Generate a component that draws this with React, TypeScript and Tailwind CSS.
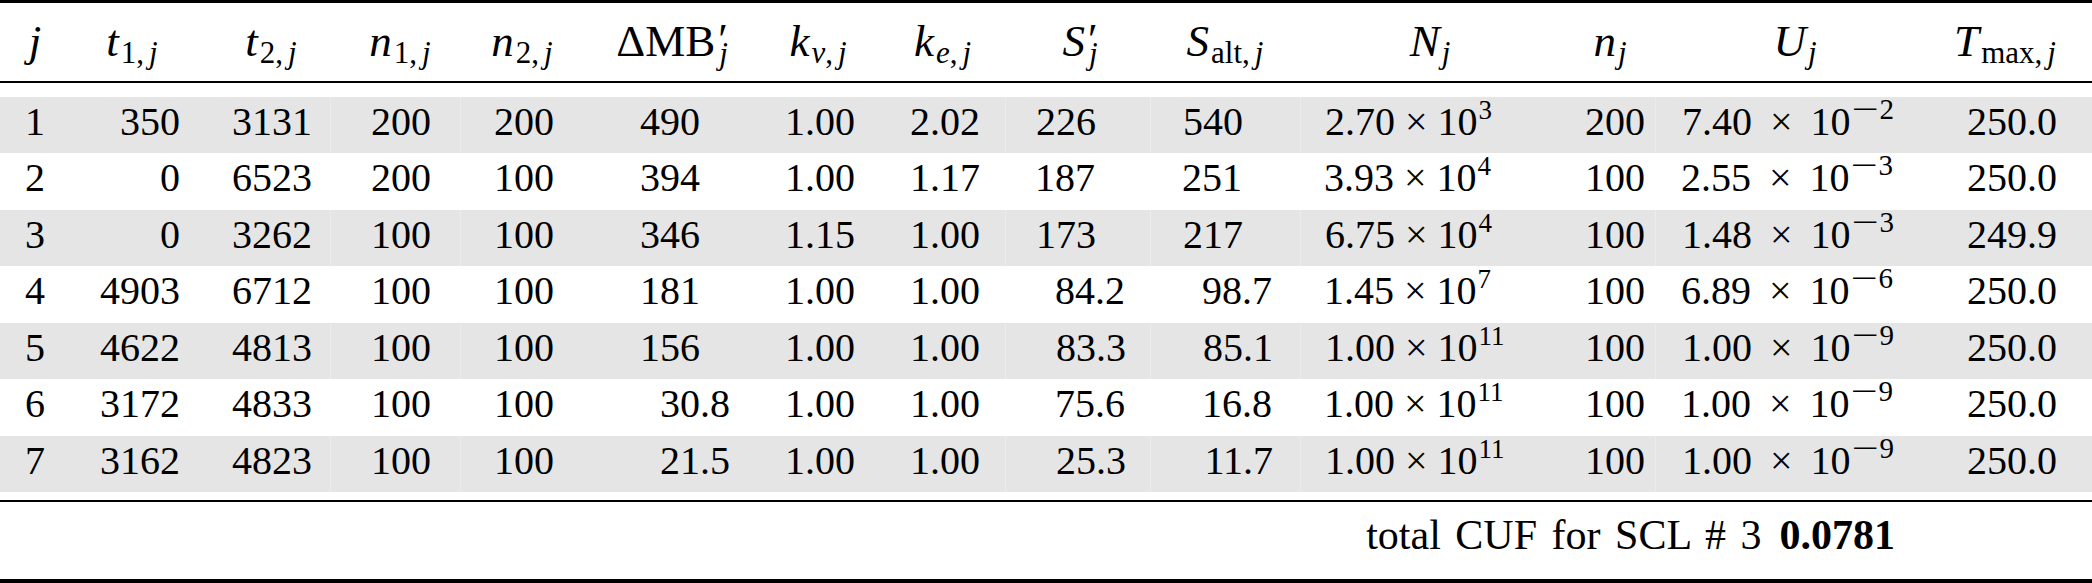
import type { ReactNode } from "react";

type Row = {
    j: string;
    t1: string;
    t2: string;
    n1: string;
    n2: string;
    mb: [string, string];
    kv: string;
    ke: string;
    s: [string, string];
    salt: [string, string];
    N: [string, string];
    n: string;
    U: [string, string];
    tmax: string;
};

const rows: Row[] = [
    { j: "1", t1: "350", t2: "3131", n1: "200", n2: "200", mb: ["490", ""], kv: "1.00", ke: "2.02", s: ["226", ""], salt: ["540", ""], N: ["2.70", "3"], n: "200", U: ["7.40", "2"], tmax: "250.0" },
    { j: "2", t1: "0", t2: "6523", n1: "200", n2: "100", mb: ["394", ""], kv: "1.00", ke: "1.17", s: ["187", ""], salt: ["251", ""], N: ["3.93", "4"], n: "100", U: ["2.55", "3"], tmax: "250.0" },
    { j: "3", t1: "0", t2: "3262", n1: "100", n2: "100", mb: ["346", ""], kv: "1.15", ke: "1.00", s: ["173", ""], salt: ["217", ""], N: ["6.75", "4"], n: "100", U: ["1.48", "3"], tmax: "249.9" },
    { j: "4", t1: "4903", t2: "6712", n1: "100", n2: "100", mb: ["181", ""], kv: "1.00", ke: "1.00", s: ["84", ".2"], salt: ["98", ".7"], N: ["1.45", "7"], n: "100", U: ["6.89", "6"], tmax: "250.0" },
    { j: "5", t1: "4622", t2: "4813", n1: "100", n2: "100", mb: ["156", ""], kv: "1.00", ke: "1.00", s: ["83", ".3"], salt: ["85", ".1"], N: ["1.00", "11"], n: "100", U: ["1.00", "9"], tmax: "250.0" },
    { j: "6", t1: "3172", t2: "4833", n1: "100", n2: "100", mb: ["30", ".8"], kv: "1.00", ke: "1.00", s: ["75", ".6"], salt: ["16", ".8"], N: ["1.00", "11"], n: "100", U: ["1.00", "9"], tmax: "250.0" },
    { j: "7", t1: "3162", t2: "4823", n1: "100", n2: "100", mb: ["21", ".5"], kv: "1.00", ke: "1.00", s: ["25", ".3"], salt: ["11", ".7"], N: ["1.00", "11"], n: "100", U: ["1.00", "9"], tmax: "250.0" },
];

const grid = "grid grid-cols-[70px_130px_130px_130px_130px_170px_120px_125px_145px_150px_230px_125px_275px_162px]";

// small typesetting helpers
const I = ({ children }: { children: ReactNode }) => <span className="italic">{children}</span>;
const Comma = () => <span className="mr-[5px]">,</span>;

const Sub = ({ children }: { children: ReactNode }) => (
    <span className="relative top-[7px] text-[31px] leading-none ml-[2px]">{children}</span>
);

const PrimeSub = ({ children }: { children: ReactNode }) => (
    <>
        <span className="inline-block w-0 relative top-[-2px] ml-[3px] text-[44px] leading-none not-italic">′</span>
        <span className="relative top-[8px] text-[31px] leading-none italic ml-[1px]">{children}</span>
    </>
);

const Sci = ({ m, e, neg }: { m: string; e: string; neg?: boolean }) => (
    <span className="whitespace-nowrap">
        {m}
        <span className={neg ? "mx-[18px]" : "mx-[10px]"}>×</span>
        10
        <span className="relative top-[-16px] leading-none ml-[1px]">
            {neg && <span className="inline-block w-[28px] text-[30px] origin-left scale-x-[1.6]">−</span>}
            <span className={neg ? "text-[29px]" : "text-[27px]"}>{e}</span>
        </span>
    </span>
);

const Dec = ({ v, w, cls }: { v: [string, string]; w: string; cls?: string }) => (
    <div className={`flex ${cls ?? ""}`}>
        <span className={`${w} text-right`}>{v[0]}</span>
        <span>{v[1]}</span>
    </div>
);

export default function App() {
    return (
        <div className="w-[2092px] h-[583px] bg-white text-black font-['Liberation_Serif',serif] text-[40px] overflow-hidden">
            <div className="h-[3px] bg-black" />
            {/* header */}
            <div className={`${grid} h-[78px] pt-[13px] leading-[50px] text-[45px]`}>
                <div className="text-center"><I>j</I></div>
                <div className="text-center pr-[6px]"><I>t</I><Sub>1<Comma /><I>j</I></Sub></div>
                <div className="text-center pl-[12px]"><I>t</I><Sub>2<Comma /><I>j</I></Sub></div>
                <div className="text-center pl-[10px]"><I>n</I><Sub>1<Comma /><I>j</I></Sub></div>
                <div className="text-center pr-[6px]"><I>n</I><Sub>2<Comma /><I>j</I></Sub></div>
                <div className="text-center pr-[6px]">ΔMB<PrimeSub>j</PrimeSub></div>
                <div className="text-center pr-[4px]"><I>k</I><Sub><I>ν</I><Comma /><I>j</I></Sub></div>
                <div className="text-center"><I>k</I><Sub><I>e</I><Comma /><I>j</I></Sub></div>
                <div className="text-center pl-[5px]"><I>S</I><PrimeSub>j</PrimeSub></div>
                <div className="text-center"><I>S</I><Sub>alt<Comma /><I>j</I></Sub></div>
                <div className="text-center pl-[30px]"><I>N</I><Sub><I>j</I></Sub></div>
                <div className="text-center pl-[35px]"><I>n</I><Sub><I>j</I></Sub></div>
                <div className="text-center pl-[5px]"><I>U</I><Sub><I>j</I></Sub></div>
                <div className="text-center pr-[12px]"><I>T</I><Sub>max<Comma /><I>j</I></Sub></div>
            </div>
            <div className="h-[2px] bg-black" />
            <div className="h-[14px]" />
            {/* body */}
            <div className="grid grid-rows-7 h-[395px]">
                {rows.map((r, i) => {
                    const shaded = i % 2 === 0;
                    const sep = shaded ? "border-l border-[#ececec]" : "";
                    return (
                        <div key={r.j} className={`${grid} leading-[50px] ${shaded ? "bg-[#e5e5e5]" : ""}`}>
                            <div className="text-center">{r.j}</div>
                            <div className="text-right pr-[20px]">{r.t1}</div>
                            <div className="text-right pr-[18px]">{r.t2}</div>
                            <div className={`text-right pr-[29px] ${sep}`}>{r.n1}</div>
                            <div className={`text-right pr-[36px] ${sep}`}>{r.n2}</div>
                            <Dec v={r.mb} w="w-[110px]" />
                            <div className="pl-[25px]">{r.kv}</div>
                            <div className="pl-[30px]">{r.ke}</div>
                            <Dec v={r.s} w="w-[90px]" cls={sep} />
                            <Dec v={r.salt} w="w-[92px]" cls={sep} />
                            <div className={`pl-[24px] ${sep}`}><Sci m={r.N[0]} e={r.N[1]} /></div>
                            <div className="text-right pr-[10px]">{r.n}</div>
                            <div className={`pl-[26px] ${sep}`}><Sci m={r.U[0]} e={r.U[1]} neg /></div>
                            <div className="text-right pr-[35px]">{r.tmax}</div>
                        </div>
                    );
                })}
            </div>
            <div className="h-[8px]" />
            <div className="h-[2px] bg-black" />
            {/* footer */}
            <div className="h-[77px] flex justify-end items-start pt-[8px] pr-[197px] leading-[50px] text-[42px]">
                <span className="[word-spacing:4px]">total CUF for SCL # 3</span>
                <span className="ml-[18px] font-bold">0.0781</span>
            </div>
            <div className="h-[4px] bg-black" />
        </div>
    );
}
